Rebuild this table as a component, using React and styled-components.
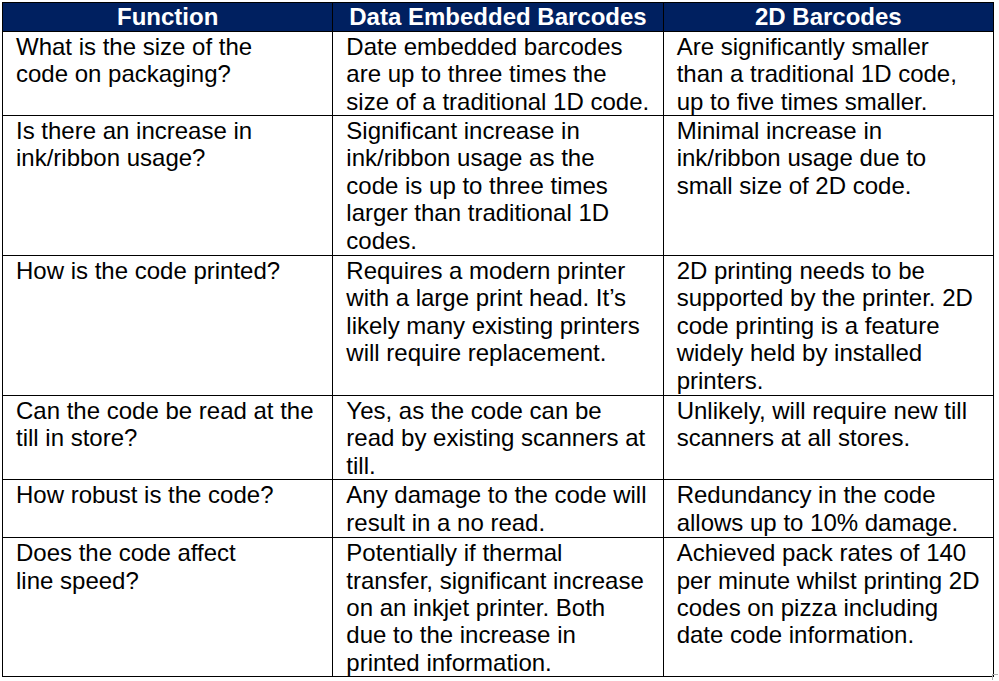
import React from "react";
import styled, { createGlobalStyle } from "styled-components";

const GlobalStyle = createGlobalStyle`
  html, body {
    margin: 0;
    padding: 0;
    background: #ffffff;
  }
  body {
    font-family: "Liberation Sans", Arial, sans-serif;
    color: #000000;
  }
`;

const Page = styled.div`
  position: relative;
  width: 999px;
  height: 681px;
  padding: 2px 0 0 2px;
  box-sizing: border-box;
  overflow: hidden;
`;

const Table = styled.table`
  width: 992px;
  border-collapse: collapse;
  table-layout: fixed;
`;

const HeadCell = styled.th`
  background: #002060;
  color: #ffffff;
  font-weight: bold;
  font-size: 24px;
  line-height: 27.7px;
  text-align: center;
  border: 1px solid #000000;
  padding: 0 4px;
  white-space: nowrap;
`;

const Cell = styled.td`
  vertical-align: top;
  font-size: 24px;
  line-height: 27.4px;
  border: 1px solid #000000;
  padding: 1px 4px 0 13px;
  height: ${(props) => props.rowHeight}px;
  box-sizing: border-box;
`;

const Line = styled.div`
  white-space: nowrap;
`;

const CornerMark = styled.span`
  position: absolute;
  right: 1px;
  bottom: 1px;
  width: 5px;
  height: 5px;
  border-left: 1px solid #b0b0b0;
  border-top: 1px solid #b0b0b0;
`;

const rows = [
  {
    height: 84,
    cells: [
      ["What is the size of the", "code on packaging?"],
      ["Date embedded barcodes", "are up to three times the", "size of a traditional 1D code."],
      ["Are significantly smaller", "than a traditional 1D code,", "up to five times smaller."],
    ],
  },
  {
    height: 140,
    cells: [
      ["Is there an increase in", "ink/ribbon usage?"],
      [
        "Significant increase in",
        "ink/ribbon usage as the",
        "code is up to three times",
        "larger than traditional 1D",
        "codes.",
      ],
      ["Minimal increase in", "ink/ribbon usage due to", "small size of 2D code."],
    ],
  },
  {
    height: 140,
    cells: [
      ["How is the code printed?"],
      [
        "Requires a modern printer",
        "with a large print head. It\u2019s",
        "likely many existing printers",
        "will require replacement.",
      ],
      [
        "2D printing needs to be",
        "supported by the printer. 2D",
        "code printing is a feature",
        "widely held by installed",
        "printers.",
      ],
    ],
  },
  {
    height: 84,
    cells: [
      ["Can the code be read at the", "till in store?"],
      ["Yes, as the code can be", "read by existing scanners at", "till."],
      ["Unlikely, will require new till", "scanners at all stores."],
    ],
  },
  {
    height: 58,
    cells: [
      ["How robust is the code?"],
      ["Any damage to the code will", "result in a no read."],
      ["Redundancy in the code", "allows up to 10% damage."],
    ],
  },
  {
    height: 139,
    cells: [
      ["Does the code affect", "line speed?"],
      [
        "Potentially if thermal",
        "transfer, significant increase",
        "on an inkjet printer. Both",
        "due to the increase in",
        "printed information.",
      ],
      [
        "Achieved pack rates of 140",
        "per minute whilst printing 2D",
        "codes on pizza including",
        "date code information.",
      ],
    ],
  },
];

const headers = ["Function", "Data Embedded Barcodes", "2D Barcodes"];

const App = () => {
  return (
    <Page>
      <GlobalStyle />
      <Table>
        <thead>
          <tr>
            {headers.map((h) => (
              <HeadCell key={h}>{h}</HeadCell>
            ))}
          </tr>
        </thead>
        <tbody>
          {rows.map((row, i) => (
            <tr key={i}>
              {row.cells.map((lines, j) => (
                <Cell key={j} rowHeight={row.height}>
                  {lines.map((text, k) => (
                    <Line key={k}>{text}</Line>
                  ))}
                </Cell>
              ))}
            </tr>
          ))}
        </tbody>
      </Table>
      <CornerMark />
    </Page>
  );
};

export default App;
